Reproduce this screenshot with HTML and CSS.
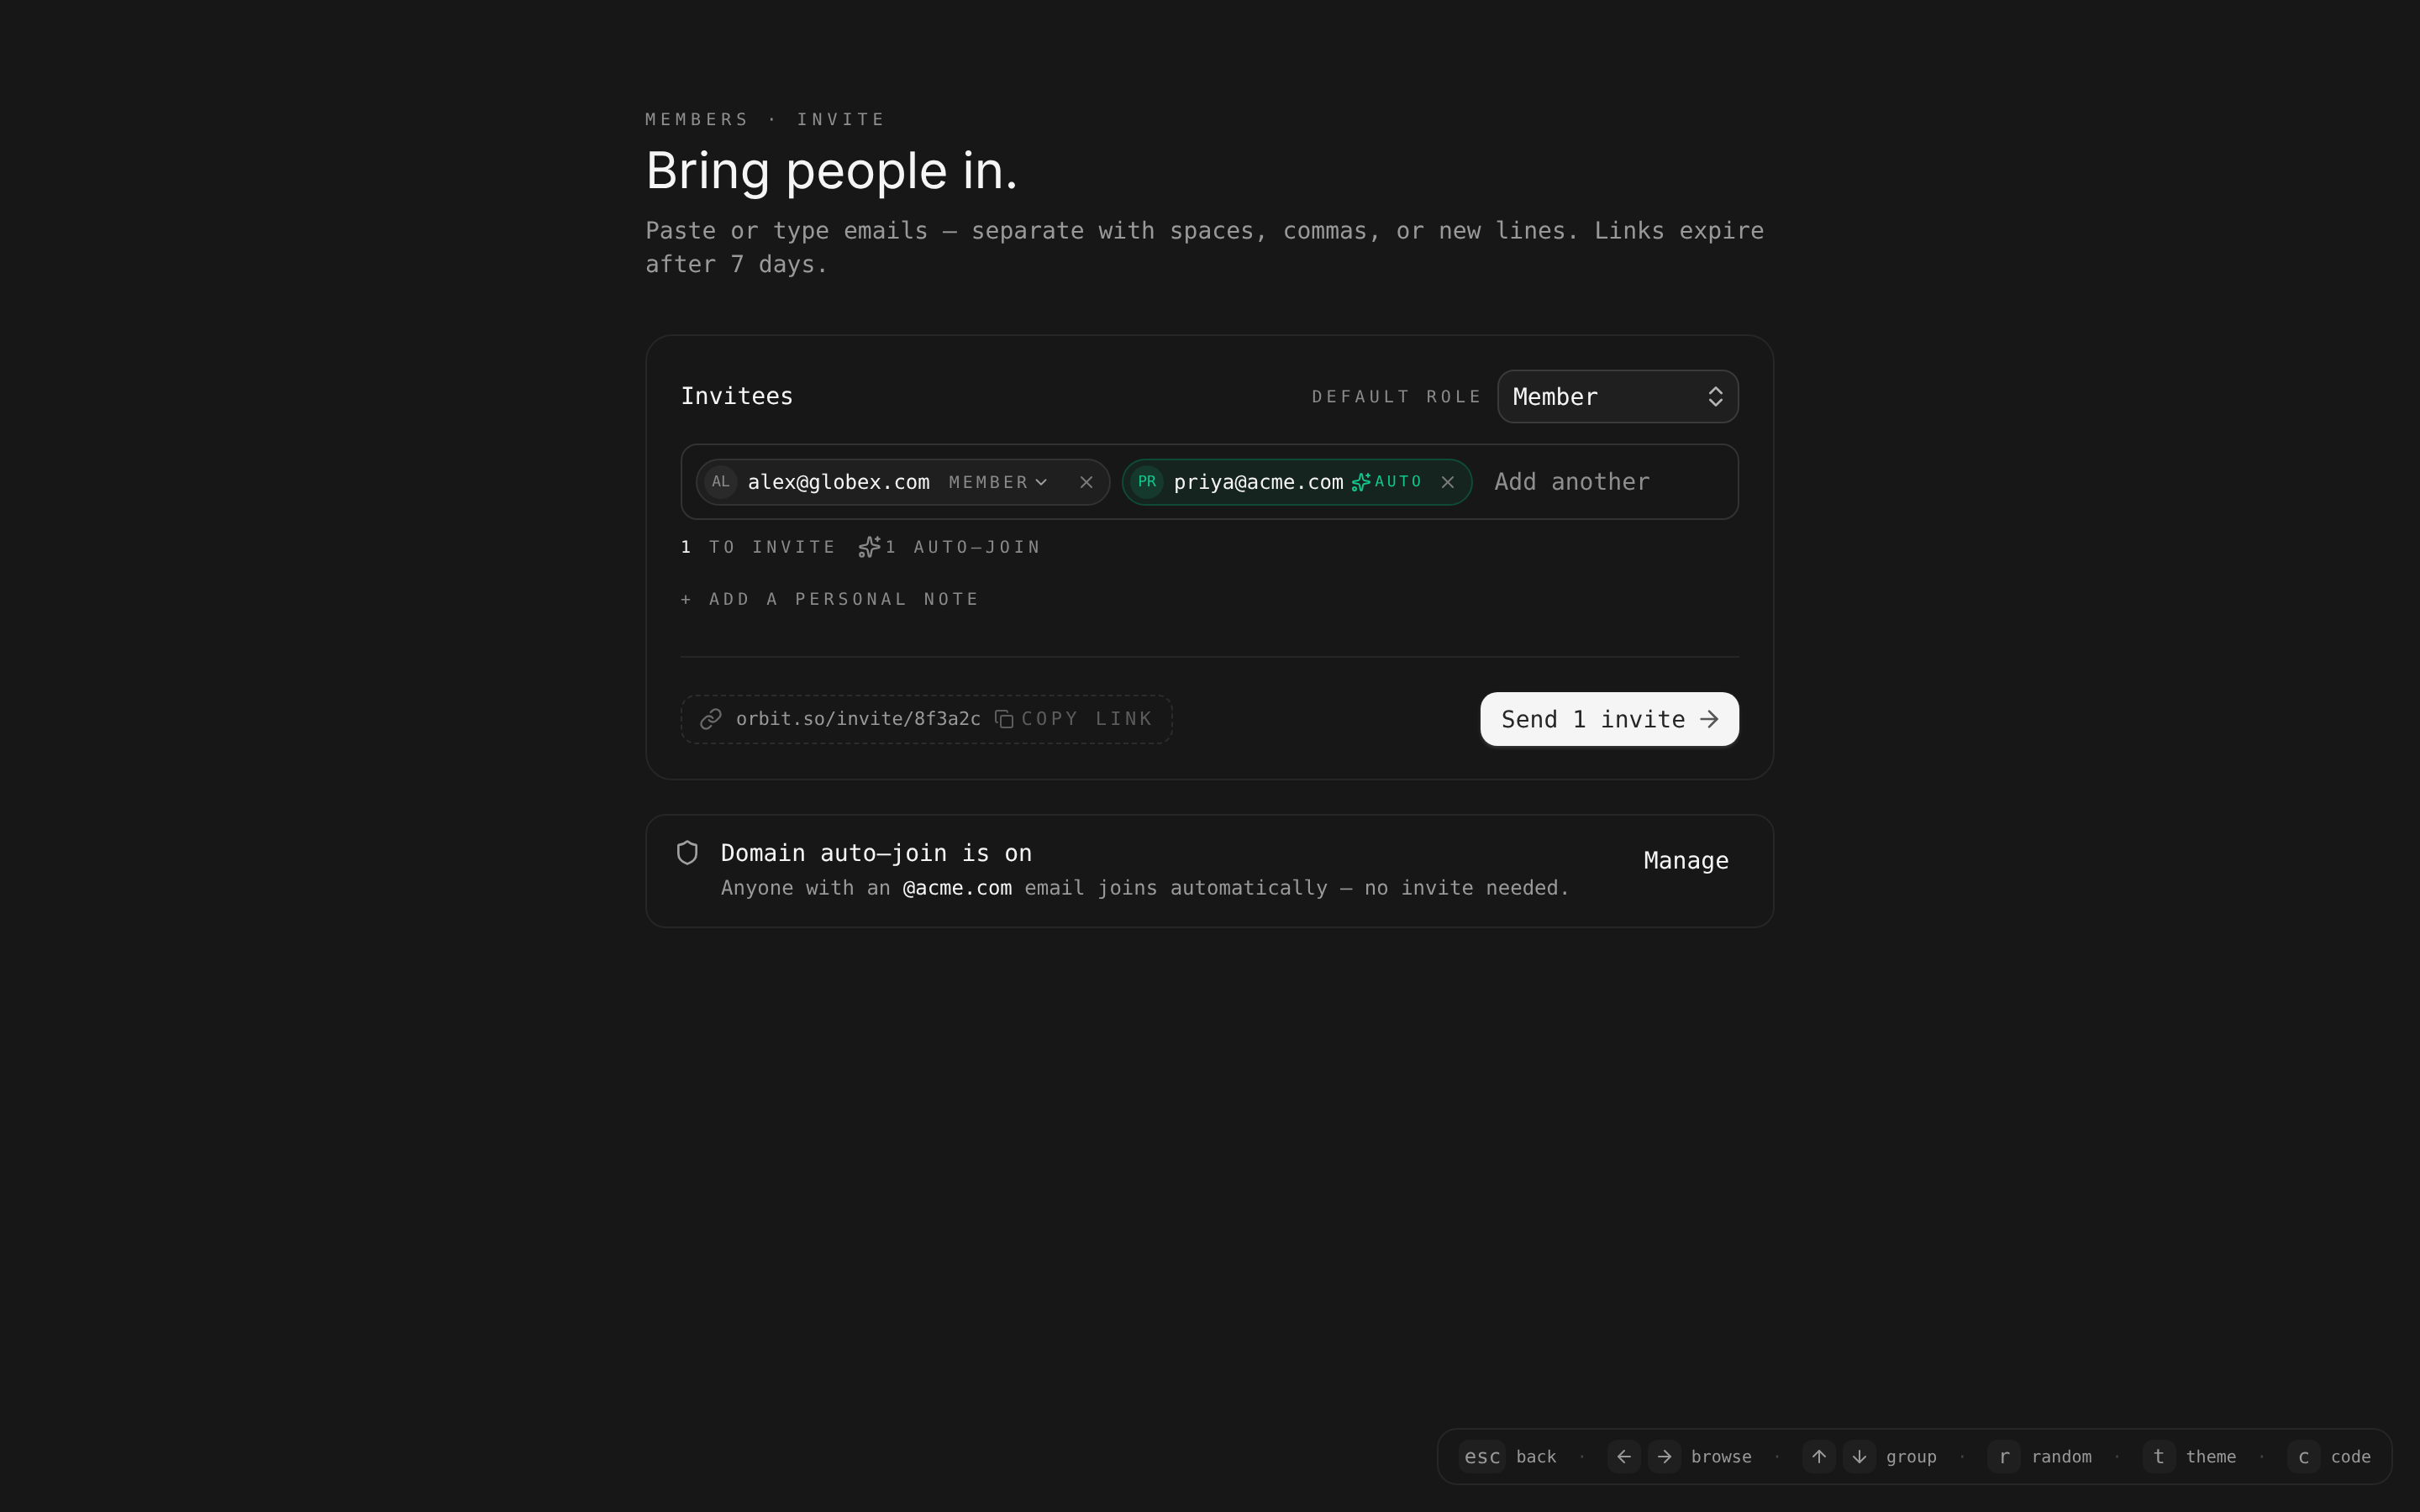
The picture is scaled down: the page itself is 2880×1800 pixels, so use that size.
FILE: index.html
```html
<!DOCTYPE html>
<html lang="en">
<head>
<meta charset="utf-8">
<title>Invite members</title>
<link rel="stylesheet" href="styles.css">
</head>
<body>
<div class="page">
  <main class="main">
    <header class="head">
      <div class="eyebrow">MEMBERS · INVITE</div>
      <h1 class="title">Bring people in.</h1>
      <p class="lede">Paste or type emails — separate with spaces, commas, or new lines. Links expire after 7 days.</p>
    </header>

    <section class="card">
      <div class="card-head">
        <div class="card-title">Invitees</div>
        <div class="role-wrap">
          <span class="caps-label">DEFAULT ROLE</span>
          <div class="select">
            <span>Member</span>
            <svg class="ic ic-32 select-ic" viewBox="0 0 24 24"><path d="m7 15 5 5 5-5"/><path d="m7 9 5-5 5 5"/></svg>
          </div>
        </div>
      </div>

      <div class="tokens">
        <div class="chip">
          <span class="avatar">AL</span>
          <span class="email">alex@globex.com</span>
          <span class="chip-role">MEMBER
            <svg class="ic ic-22" viewBox="0 0 24 24"><path d="m6 9 6 6 6-6"/></svg>
          </span>
          <svg class="ic ic-24 chip-x" viewBox="0 0 24 24"><path d="M18 6 6 18"/><path d="m6 6 12 12"/></svg>
        </div>
        <div class="chip chip-auto">
          <span class="avatar">PR</span>
          <span class="email">priya@acme.com</span>
          <span class="auto-tag">
            <svg class="ic ic-24" viewBox="0 0 24 24"><path d="M11.017 2.814a1 1 0 0 1 1.966 0l1.051 5.558a2 2 0 0 0 1.594 1.594l5.558 1.051a1 1 0 0 1 0 1.966l-5.558 1.051a2 2 0 0 0-1.594 1.594l-1.051 5.558a1 1 0 0 1-1.966 0l-1.051-5.558a2 2 0 0 0-1.594-1.594l-5.558-1.051a1 1 0 0 1 0-1.966l5.558-1.051a2 2 0 0 0 1.594-1.594z"/><path d="M20 2v4"/><path d="M22 4h-4"/><circle cx="4" cy="20" r="2"/></svg>
            AUTO
          </span>
          <svg class="ic ic-24 chip-x" viewBox="0 0 24 24"><path d="M18 6 6 18"/><path d="m6 6 12 12"/></svg>
        </div>
        <span class="placeholder">Add another</span>
      </div>

      <div class="meta">
        <span><b class="count">1</b> TO INVITE</span>
        <span class="meta-auto">
          <svg class="ic ic-28" viewBox="0 0 24 24"><path d="M11.017 2.814a1 1 0 0 1 1.966 0l1.051 5.558a2 2 0 0 0 1.594 1.594l5.558 1.051a1 1 0 0 1 0 1.966l-5.558 1.051a2 2 0 0 0-1.594 1.594l-1.051 5.558a1 1 0 0 1-1.966 0l-1.051-5.558a2 2 0 0 0-1.594-1.594l-5.558-1.051a1 1 0 0 1 0-1.966l5.558-1.051a2 2 0 0 0 1.594-1.594z"/><path d="M20 2v4"/><path d="M22 4h-4"/><circle cx="4" cy="20" r="2"/></svg>
          1 AUTO–JOIN
        </span>
      </div>

      <div class="note">+ ADD A PERSONAL NOTE</div>

      <div class="card-foot">
        <div class="link-pill">
          <svg class="ic ic-28" viewBox="0 0 24 24"><path d="M10 13a5 5 0 0 0 7.54.54l3-3a5 5 0 0 0-7.07-7.07l-1.72 1.71"/><path d="M14 11a5 5 0 0 0-7.54-.54l-3 3a5 5 0 0 0 7.07 7.07l1.71-1.71"/></svg>
          <span class="link-url">orbit.so/invite/8f3a2c</span>
          <span class="copy">
            <svg class="ic ic-24" viewBox="0 0 24 24"><rect width="14" height="14" x="8" y="8" rx="2" ry="2"/><path d="M4 16c-1.1 0-2-.9-2-2V4c0-1.1.9-2 2-2h10c1.1 0 2 .9 2 2"/></svg>
            COPY LINK
          </span>
        </div>
        <div class="send">
          <span>Send 1 invite</span>
          <svg class="ic ic-32" viewBox="0 0 24 24"><path d="M5 12h14"/><path d="m12 5 7 7-7 7"/></svg>
        </div>
      </div>
    </section>

    <section class="domain">
      <svg class="ic ic-32 domain-ic" viewBox="0 0 24 24"><path d="M20 13c0 5-3.5 7.5-7.66 8.95a1 1 0 0 1-.67-.01C7.5 20.5 4 18 4 13V6a1 1 0 0 1 1-1c2 0 4.5-1.2 6.24-2.72a1.17 1.17 0 0 1 1.52 0C14.51 3.81 17 5 19 5a1 1 0 0 1 1 1z"/></svg>
      <div class="domain-body">
        <div class="domain-title">Domain auto–join is on</div>
        <div class="domain-text">Anyone with an <span class="hl">@acme.com</span> email joins automatically — no invite needed.</div>
      </div>
      <div class="manage">Manage</div>
    </section>
  </main>

  <footer class="hints">
    <div class="hint"><kbd class="key key-wide">esc</kbd><span class="hint-label">back</span></div>
    <span class="sep">·</span>
    <div class="hint">
      <div class="keys">
        <kbd class="key"><svg class="ic ic-24" viewBox="0 0 24 24"><path d="m12 19-7-7 7-7"/><path d="M19 12H5"/></svg></kbd>
        <kbd class="key"><svg class="ic ic-24" viewBox="0 0 24 24"><path d="M5 12h14"/><path d="m12 5 7 7-7 7"/></svg></kbd>
      </div>
      <span class="hint-label">browse</span>
    </div>
    <span class="sep">·</span>
    <div class="hint">
      <div class="keys">
        <kbd class="key"><svg class="ic ic-24" viewBox="0 0 24 24"><path d="m5 12 7-7 7 7"/><path d="M12 19V5"/></svg></kbd>
        <kbd class="key"><svg class="ic ic-24" viewBox="0 0 24 24"><path d="M12 5v14"/><path d="m19 12-7 7-7-7"/></svg></kbd>
      </div>
      <span class="hint-label">group</span>
    </div>
    <span class="sep">·</span>
    <div class="hint"><kbd class="key">r</kbd><span class="hint-label">random</span></div>
    <span class="sep">·</span>
    <div class="hint"><kbd class="key">t</kbd><span class="hint-label">theme</span></div>
    <span class="sep">·</span>
    <div class="hint"><kbd class="key">c</kbd><span class="hint-label">code</span></div>
  </footer>
</div>
</body>
</html>
```

FILE: styles.css
```css
* { box-sizing: border-box; }
html, body { margin: 0; padding: 0; }
body {
  background: #171717;
  color: #f5f5f5;
  font-family: "DejaVu Sans Mono", monospace;
  font-size: 28px;
  text-rendering: geometricPrecision;
}
.page {
  min-height: 100vh;
  display: flex;
  flex-direction: column;
  padding: 128px 32px 32px;
  will-change: transform;
}
.main {
  width: 1344px;
  margin: 0 auto;
  display: flex;
  flex-direction: column;
}
.ic {
  flex: none;
  fill: none;
  stroke: currentColor;
  stroke-width: 2;
  stroke-linecap: round;
  stroke-linejoin: round;
  display: block;
}
.ic-22 { width: 22px; height: 22px; }
.ic-24 { width: 24px; height: 24px; }
.ic-28 { width: 28px; height: 28px; }
.ic-32 { width: 32px; height: 32px; }

/* heading */
.eyebrow {
  font-size: 20px;
  line-height: 28px;
  letter-spacing: 6px;
  color: #8f8f8f;
}
.title {
  margin: 14px 0 0;
  font-family: Inter, sans-serif;
  font-size: 60px;
  line-height: 66px;
  font-weight: 400;
  letter-spacing: 0;
  color: #f5f5f5;
}
.lede {
  margin: 19px 0 0;
  font-size: 28px;
  line-height: 40px;
  color: #999;
}

/* main card */
.card {
  margin-top: 63px;
  padding: 40px 40px 39px;
  border: 2px solid #262626;
  border-radius: 32px;
  display: flex;
  flex-direction: column;
}
.card-head {
  display: flex;
  align-items: center;
  justify-content: space-between;
}
.card-title { font-size: 28px; line-height: 40px; }
.role-wrap { display: flex; align-items: center; gap: 16px; }
.caps-label {
  font-size: 20px;
  letter-spacing: 5px;
  color: #8a8a8a;
}
.select {
  width: 288px;
  height: 64px;
  padding: 0 10px 0 17px;
  display: flex;
  align-items: center;
  justify-content: space-between;
  background: #1f1f1f;
  border: 2px solid #3a3a3a;
  border-radius: 20px;
}
.select-ic { color: #b5b5b5; }

/* token field */
.tokens {
  margin-top: 24px;
  height: 91px;
  padding: 0 16px;
  display: flex;
  align-items: center;
  gap: 13px;
  border: 2px solid #333;
  border-radius: 20px;
}
.chip {
  height: 56px;
  padding: 0 15px 0 8px;
  display: flex;
  align-items: center;
  background: #1f1f1f;
  border: 2px solid #333;
  border-radius: 28px;
}
.avatar {
  width: 40px;
  height: 40px;
  border-radius: 50%;
  background: #2a2a2a;
  color: #8a8a8a;
  font-size: 18px;
  display: flex;
  align-items: center;
  justify-content: center;
}
.email {
  margin-left: 12px;
  font-size: 24px;
  color: #f5f5f5;
}
.chip-role {
  margin-left: 23px;
  margin-right: 31px;
  display: flex;
  align-items: center;
  gap: 2px;
  font-size: 20px;
  letter-spacing: 4px;
  color: #8a8a8a;
}
.chip-role .ic { color: #a0a0a0; }
.chip-x { color: #7a7a7a; }
.chip-auto {
  padding-right: 16px;
  background: #16241f;
  border-color: #0f4a38;
}
.chip-auto .avatar {
  background: #15392c;
  color: #10c68c;
}
.auto-tag {
  margin-left: 9px;
  margin-right: 17px;
  display: flex;
  align-items: center;
  gap: 4px;
  font-size: 18px;
  letter-spacing: 3.7px;
  color: #10c68c;
}
.placeholder {
  margin-left: 12px;
  color: #8f8f8f;
}

/* meta rows */
.meta {
  margin-top: 18px;
  display: flex;
  align-items: center;
  gap: 24px;
  font-size: 20px;
  line-height: 28px;
  letter-spacing: 5px;
  color: #8a8a8a;
}
.count { font-weight: 400; color: #f5f5f5; }
.meta-auto { display: flex; align-items: center; gap: 4px; }
.note {
  margin-top: 34px;
  padding-bottom: 54px;
  border-bottom: 2px solid #262626;
  font-size: 20px;
  line-height: 28px;
  letter-spacing: 5px;
  color: #8a8a8a;
}
.card-foot {
  margin-top: 41px;
  display: flex;
  align-items: center;
  justify-content: space-between;
}
.link-pill {
  height: 59px;
  padding: 0 20px;
  display: flex;
  align-items: center;
  gap: 16px;
  border: 2px dashed #2c2c2c;
  border-radius: 18px;
  color: #6a6a6a;
}
.link-url { font-size: 22px; color: #999; }
.copy {
  display: flex;
  align-items: center;
  gap: 8px;
  font-size: 22px;
  letter-spacing: 4.4px;
  color: #5c5c5c;
}
.send {
  height: 64px;
  padding: 0 20px 0 25px;
  display: flex;
  align-items: center;
  gap: 12px;
  background: #f5f5f5;
  color: #262626;
  border-radius: 20px;
  box-shadow: 0 2px 4px rgba(255, 255, 255, 0.16);
}
.send .ic { color: #555; }

/* domain card */
.domain {
  margin-top: 40px;
  padding: 26px 32px 28px;
  display: flex;
  align-items: flex-start;
  gap: 24px;
  border: 2px solid #262626;
  border-radius: 24px;
}
.domain-ic { margin-top: 2px; color: #a0a0a0; }
.domain-body { flex: 1; }
.domain-title { line-height: 38px; }
.domain-text { margin-top: 4px; font-size: 24px; line-height: 36px; color: #999; }
.hl { color: #f5f5f5; }
.manage {
  padding: 8px 20px 8px 0;
  line-height: 40px;
}

/* keyboard hints */
.hints {
  margin-top: auto;
  align-self: flex-end;
  height: 68px;
  padding: 0 24px;
  display: flex;
  align-items: center;
  gap: 24px;
  border: 2px solid #262626;
  border-radius: 24px;
  font-size: 20px;
  color: #999;
}
.hint { display: flex; align-items: center; gap: 12px; }
.keys { display: flex; gap: 8px; }
.key {
  width: 40px;
  height: 40px;
  display: flex;
  align-items: center;
  justify-content: center;
  background: #1f1f1f;
  border-radius: 12px;
  font-family: inherit;
  font-size: 24px;
  color: #999;
}
.key-wide { width: 56px; }
.sep { color: #444; }
```
